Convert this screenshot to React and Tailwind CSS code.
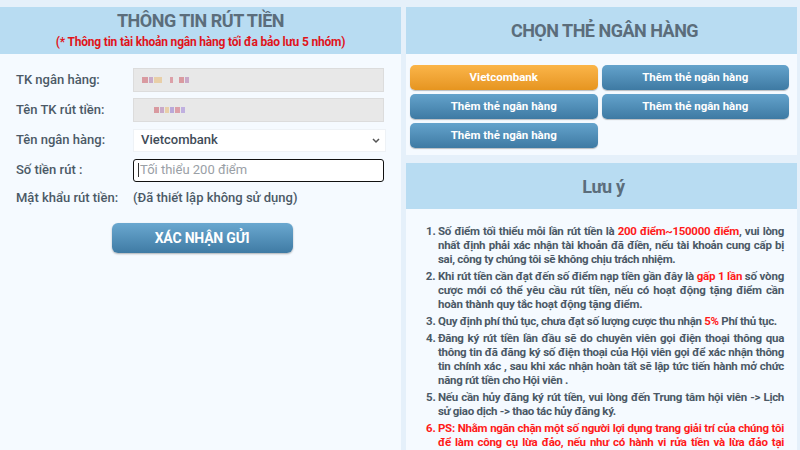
import React from "react";

const blueBtn =
  "h-[25px] rounded-[5px] bg-gradient-to-b from-[#64a3cc] to-[#3e7aa3] text-white text-[11.5px] font-bold flex items-center justify-center shadow-[0_1px_1px_rgba(0,0,0,0.25)]";

function Row({ label, children }) {
  return (
    <div className="flex items-center h-[30px]">
      <div className="w-[117px] shrink-0 text-[13px] font-medium text-[#4b5966]">{label}</div>
      <div className="flex-1">{children}</div>
    </div>
  );
}

function Blur({ widths }) {
  const colors = ["#d99aa0", "#c9a9c8", "#e8cfa8", "#b9a9d9", "#dca0a8", "#c0b0e0"];
  return (
    <div className="flex items-center gap-[1px]">
      {widths.map((w, i) =>
        w < 0 ? (
          <div key={i} style={{ width: -w }} />
        ) : (
          <div key={i} className="h-[6px]" style={{ width: w, background: colors[i % colors.length] }} />
        )
      )}
    </div>
  );
}

export default function App() {
  return (
    <div className="w-[800px] h-[450px] overflow-hidden bg-[#e5f0fa] pt-[7px] flex gap-[5px] font-['Roboto',sans-serif]">
      {/* Left panel */}
      <div className="w-[401px] shrink-0 bg-[#f5faff] flex flex-col">
        <div className="h-[47px] bg-[#b8dcf2] flex flex-col items-center justify-center">
          <div className="text-[18px] font-bold text-[#5b6d7b] leading-[22px] tracking-[-0.5px] -mt-[2px]">THÔNG TIN RÚT TIỀN</div>
          <div className="text-[12px] font-bold text-[#e0141b] leading-[16px] mt-[2px] tracking-[-0.2px]">
            (* Thông tin tài khoản ngân hàng tối đa bảo lưu 5 nhóm)
          </div>
        </div>
        <div className="pl-[16px] pr-[17px] pt-[11px] flex flex-col">
          <Row label="TK ngân hàng:">
            <div className="h-[24px] bg-[#e8e8e8] border border-[#dcdcdc] flex items-center pl-[8px]">
              <Blur widths={[6, 4, 8, -6, 3, -4, 5, 4]} />
            </div>
          </Row>
          <Row label="Tên TK rút tiền:">
            <div className="h-[24px] bg-[#e8e8e8] border border-[#dcdcdc] flex items-center pl-[20px]">
              <Blur widths={[5, 4, 4, 4, 5, 4]} />
            </div>
          </Row>
          <Row label="Tên ngân hàng:">
            <div className="h-[23px] bg-white border border-[#eef2f6] flex items-center justify-between pl-[7px] pr-[4px] mr-[-2px]">
              <span className="text-[13px] font-medium text-[#3f4c58]">Vietcombank</span>
              <svg width="10" height="10" viewBox="0 0 10 10">
                <path d="M2 4 L5 7 L8 4" fill="none" stroke="#555" strokeWidth="1.5" />
              </svg>
            </div>
          </Row>
          <Row label="Số tiền rút :">
            <div className="h-[23px] bg-white border-[1.5px] border-[#111] rounded-[3px] flex items-center pl-[4px]">
              <span className="w-[1px] h-[14px] bg-[#333] mr-[1px]" />
              <span className="text-[13px] text-[#9aa0a6]">Tối thiểu 200 điểm</span>
            </div>
          </Row>
          <div className="flex items-center h-[22px] mt-[2px]">
            <div className="w-[117px] shrink-0 text-[13px] font-medium text-[#4b5966]">Mật khẩu rút tiền:</div>
            <div className="text-[13px] font-medium text-[#4b5966]">(Đã thiết lập không sử dụng)</div>
          </div>
          <div className="flex justify-center mt-[14px]">
            <div className="w-[181px] h-[30px] rounded-[6px] bg-gradient-to-b from-[#6aa8d0] to-[#3f7ba4] text-white text-[14px] font-bold tracking-[-0.2px] flex items-center justify-center shadow-[0_1px_2px_rgba(0,0,0,0.3)] ml-[4px]">
              XÁC NHẬN GỬI
            </div>
          </div>
        </div>
      </div>

      {/* Right panel */}
      <div className="w-[391px] shrink-0 flex flex-col gap-[8px]">
        <div className="bg-[#f5faff]">
          <div className="h-[47px] bg-[#b8dcf2] flex items-center justify-center pl-[6px]">
            <div className="text-[18px] font-bold text-[#5b6d7b] tracking-[-0.5px]">CHỌN THẺ NGÂN HÀNG</div>
          </div>
          <div className="grid grid-cols-2 gap-x-[4px] gap-y-[4px] pl-[4px] pr-[8px] pt-[11px] pb-[7px]">
            <div className="h-[25px] rounded-[5px] bg-gradient-to-b from-[#fbb548] to-[#e6951f] text-white text-[11.5px] font-bold flex items-center justify-center shadow-[0_1px_1px_rgba(0,0,0,0.25)]">
              Vietcombank
            </div>
            <div className={blueBtn}>Thêm thẻ ngân hàng</div>
            <div className={blueBtn}>Thêm thẻ ngân hàng</div>
            <div className={blueBtn}>Thêm thẻ ngân hàng</div>
            <div className={blueBtn}>Thêm thẻ ngân hàng</div>
          </div>
        </div>
        <div className="bg-[#f5faff] flex-1">
          <div className="h-[46px] bg-[#b8dcf2] flex items-center justify-center pl-[4px]">
            <div className="text-[18px] font-bold text-[#5b6d7b] tracking-[-0.3px]">Lưu ý</div>
          </div>
          <ol className="list-decimal pl-[32px] pr-[13px] pt-[15px] text-[11.5px] font-bold tracking-[-0.3px] text-[#4b5966] leading-[14px] text-justify marker:text-[#4b5966]">
            <li className="mb-[3px]">
              Số điểm tối thiểu mỗi lần rút tiền là <span className="text-[#ff1a1a]">200 điểm~150000 điểm</span>, vui lòng
              nhất định phải xác nhận tài khoản đã điền, nếu tài khoản cung cấp bị sai, công ty chúng tôi sẽ không chịu
              trách nhiệm.
            </li>
            <li className="mb-[3px] tracking-[-0.2px]">
              Khi rút tiền cần đạt đến số điểm nạp tiền gần đây là <span className="text-[#ff1a1a]">gấp 1 lần</span> số
              vòng cược mới có thể yêu cầu rút tiền, nếu có hoạt động tặng điểm cần hoàn thành quy tắc hoạt động tặng
              điểm.
            </li>
            <li className="mb-[3px]">
              Quy định phí thủ tục, chưa đạt số lượng cược thu nhận <span className="text-[#ff1a1a]">5%</span> Phí thủ
              tục.
            </li>
            <li className="mb-[3px]">
              Đăng ký rút tiền lần đầu sẽ do chuyên viên gọi điện thoại thông qua thông tin đã đăng ký số điện thoại của
              Hội viên gọi để xác nhận thông tin chính xác , sau khi xác nhận hoàn tất sẽ lập tức tiến hành mở chức năng
              rút tiền cho Hội viên .
            </li>
            <li className="mb-[3px]">
              Nếu cần hủy đăng ký rút tiền, vui lòng đến Trung tâm hội viên -&gt; Lịch sử giao dịch -&gt; thao tác hủy
              đăng ký.
            </li>
            <li className="mb-[3px] text-[#ff1a1a] marker:text-[#ff1a1a]">
              PS: Nhằm ngăn chặn một số người lợi dụng trang giải trí của chúng tôi để làm công cụ lừa đảo, nếu như có
              hành vi rửa tiền và lừa đảo tại trang của chúng tôi, chúng tôi sẽ khóa tài khoản vĩnh viễn.
            </li>
          </ol>
        </div>
      </div>
    </div>
  );
}
